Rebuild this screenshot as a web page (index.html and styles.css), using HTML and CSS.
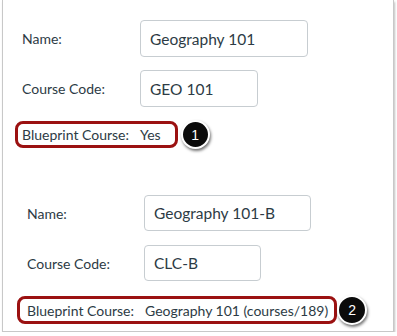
FILE: index.html
```html
<!DOCTYPE html>
<html lang="en">
<head>
    <meta charset="UTF-8">
    <meta name="viewport" content="width=device-width, initial-scale=1.0">
    <title>Blueprint Course Settings</title>
    <link rel="stylesheet" href="styles.css">
</head>
<body>

<div class="panel">
    <div class="settings first">
        <div class="row">
            <label class="label">Name:</label>
            <div class="field wide">Geography 101</div>
        </div>
        <div class="row">
            <label class="label">Course Code:</label>
            <div class="field narrow">GEO 101</div>
        </div>
        <div class="blueprint-row">
            <div class="blueprint">Blueprint Course:<span class="value">Yes</span></div>
            <span class="badge">1</span>
        </div>
    </div>

    <div class="settings second">
        <div class="row">
            <label class="label">Name:</label>
            <div class="field wide">Geography 101-B</div>
        </div>
        <div class="row">
            <label class="label">Course Code:</label>
            <div class="field narrow">CLC-B</div>
        </div>
        <div class="blueprint-row">
            <div class="blueprint">Blueprint Course:<span class="value">Geography 101 (courses/189)</span></div>
            <span class="badge">2</span>
        </div>
    </div>
</div>

</body>
</html>
```

FILE: styles.css
```css
body {
    margin: 0;
    background-color: #fff;
    font-family: Lato, "Noto Sans", sans-serif;
    color: #2d3b45;
}
.panel {
    width: 392px;
    height: 332px;
    margin-left: 2px;
    border: 1px solid #c8c8c8;
    border-top: none;
    box-sizing: border-box;
    box-shadow: 1px 2px 2px rgba(0, 0, 0, 0.25);
    overflow: hidden;
}
.settings.first {
    padding: 20px 0 0 19px;
}
.settings.second {
    padding: 46px 0 0 24px;
}
.row {
    display: grid;
    grid-template-columns: 118px auto;
    align-items: center;
    margin-bottom: 13px;
    font-size: 14px;
}
.second .row {
    grid-template-columns: 117px auto;
    margin-bottom: 14px;
}
.field {
    height: 37px;
    box-sizing: border-box;
    border: 1px solid #c7cdd1;
    border-radius: 4px;
    padding: 0 9px;
    display: flex;
    align-items: center;
    font-size: 15.5px;
}
.second .field {
    height: 36px;
    padding: 0 9px;
}
.field.wide {
    width: 168px;
}
.second .field.wide {
    width: 167px;
}
.field.narrow {
    width: 118px;
}
.second .field.narrow {
    width: 117px;
}
.blueprint-row {
    display: flex;
    align-items: center;
    margin-left: -7px;
    margin-top: 3px;
}
.second .blueprint-row {
    margin-left: -10px;
    margin-top: 1px;
}
.blueprint {
    border: 3px solid #9b1111;
    border-radius: 8px;
    padding: 0 14px 0 4px;
    height: 27px;
    box-sizing: border-box;
    display: flex;
    align-items: center;
    font-size: 14px;
}
.second .blueprint {
    padding: 0 6px 0 7px;
    height: 28px;
}
.value {
    margin-left: 11px;
}
.badge {
    width: 25px;
    height: 25px;
    border-radius: 50%;
    background-color: #0b0b0b;
    border: 2px solid #fff;
    box-shadow: 1px 2px 3px rgba(0, 0, 0, 0.55);
    color: #fff;
    font-family: "Liberation Sans", Arial, sans-serif;
    font-size: 14px;
    display: flex;
    align-items: center;
    justify-content: center;
    margin-left: 3px;
}
.second .badge {
    width: 26px;
    height: 26px;
    margin-left: 0;
}
```
